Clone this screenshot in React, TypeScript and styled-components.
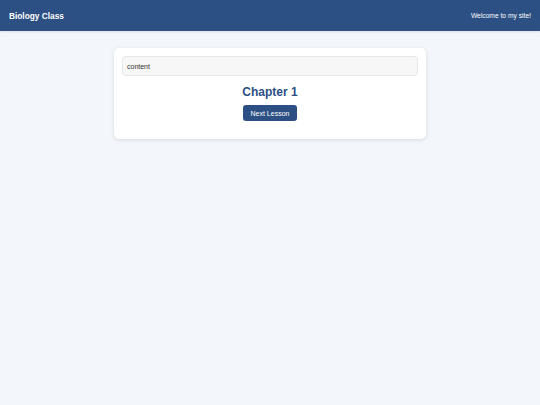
import React from 'react';
import styled, { createGlobalStyle } from 'styled-components';

const GlobalStyle = createGlobalStyle`
    html, body {
        margin: 0;
        padding: 0;
        background: #f3f6fa;
        font-family: "Liberation Sans", Arial, sans-serif;
    }
`;

const App = () => {
    return (
        <Page>
            <GlobalStyle />
            <Header>
                <SiteTitle>Biology Class</SiteTitle>
                <Welcome>Welcome to my site!</Welcome>
            </Header>
            <Main>
                <Card>
                    <ContentBox>content</ContentBox>
                    <ChapterTitle>Chapter 1</ChapterTitle>
                    <NextButton>Next Lesson</NextButton>
                </Card>
            </Main>
        </Page>
    );
};

const Page = styled.div`
    min-height: 405px;
    background: #f3f6fa;
`;

const Header = styled.header`
    height: 31px;
    display: flex;
    align-items: center;
    justify-content: space-between;
    padding: 0 9px 0 9px;
    background: #2c4f84;
    color: #ffffff;
    box-shadow: 0 1px 2px rgba(0, 0, 0, 0.1);
`;

const SiteTitle = styled.h1`
    margin: 0;
    font-size: 8.3px;
    font-weight: bold;
`;

const Welcome = styled.span`
    font-size: 6.7px;
`;

const Main = styled.main`
    display: flex;
    justify-content: center;
    padding-top: 17px;
`;

const Card = styled.section`
    width: 296px;
    padding: 8px 8px 18px;
    display: flex;
    flex-direction: column;
    align-items: center;
    background: #ffffff;
    border-radius: 5px;
    box-shadow: 0 1px 4px rgba(0, 0, 0, 0.12);
`;

const ContentBox = styled.div`
    align-self: stretch;
    box-sizing: border-box;
    height: 20px;
    padding: 0 4px;
    display: flex;
    align-items: center;
    font-size: 7px;
    color: #333333;
    background: #f7f7f7;
    border: 1px solid #e6e6e6;
    border-radius: 4px;
`;

const ChapterTitle = styled.h2`
    margin: 9px 0 6px;
    font-size: 12px;
    font-weight: bold;
    color: #2c4f84;
`;

const NextButton = styled.button`
    width: 54px;
    height: 16px;
    padding: 0;
    font-family: inherit;
    font-size: 7px;
    color: #ffffff;
    background: #2c4f84;
    border: none;
    border-radius: 3px;
    cursor: pointer;
`;

export default App;
